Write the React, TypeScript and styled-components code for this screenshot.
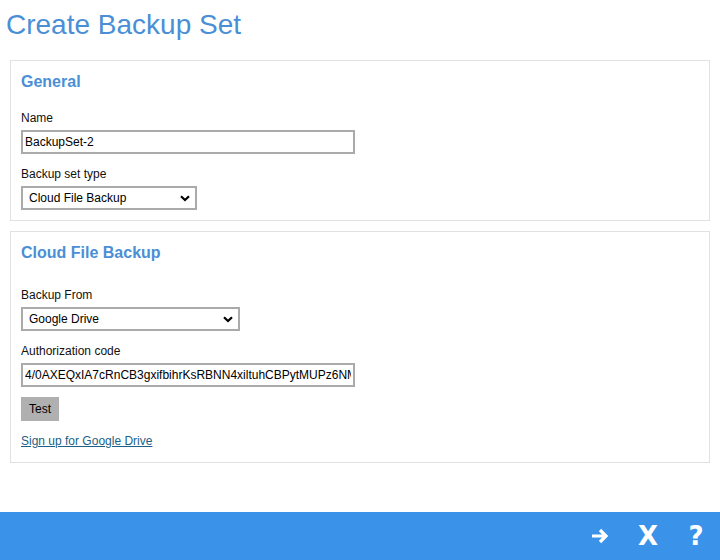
import React from 'react';
import styled, { createGlobalStyle } from 'styled-components';

const GlobalStyle = createGlobalStyle`
  html, body {
    margin: 0;
    padding: 0;
    background: #fff;
    font-family: "Liberation Sans", Arial, sans-serif;
  }
`;

const Page = styled.div`
  width: 720px;
  height: 560px;
  display: flex;
  flex-direction: column;
`;

const Content = styled.div`
  flex: 1;
  padding: 0 10px;
`;

const Title = styled.h1`
  margin: 0 0 0 -4px;
  padding-top: 9px;
  height: 60px;
  box-sizing: border-box;
  font-size: 28px;
  font-weight: normal;
  color: #4a8fd6;
  line-height: 32px;
`;

const Panel = styled.section`
  border: 1px solid #e2e2e2;
  padding: 11px 10px 10px;
  margin-bottom: 10px;
`;

const PanelTitle = styled.h2<{ $gap: number }>`
  margin: 0 0 ${(p) => p.$gap}px;
  font-size: 16px;
  font-weight: bold;
  color: #4a8fd6;
  line-height: 20px;
`;

const Field = styled.div<{ $after?: number }>`
  display: flex;
  flex-direction: column;
  align-items: flex-start;
  margin-bottom: ${(p) => p.$after ?? 13}px;
  &:last-child {
    margin-bottom: 0;
  }
`;

const Label = styled.label`
  font-size: 12px;
  color: #111;
  line-height: 14px;
  margin-bottom: 5px;
`;

const TextInput = styled.input`
  width: 334px;
  height: 24px;
  box-sizing: border-box;
  border: 2px solid #aaa;
  padding: 0 2px;
  font-family: "Liberation Sans", Arial, sans-serif;
  font-size: 12px;
  color: #000;
  outline: none;
`;

const SelectBox = styled.div<{ $w: number }>`
  width: ${(p) => p.$w}px;
  height: 24px;
  box-sizing: border-box;
  border: 2px solid #aaa;
  display: flex;
  align-items: center;
  padding: 0 5px 0 6px;
`;

const Select = styled.select`
  flex: 1;
  appearance: none;
  border: none;
  background: transparent;
  padding: 0;
  font-family: "Liberation Sans", Arial, sans-serif;
  font-size: 12px;
  color: #000;
  outline: none;
`;

const Button = styled.button`
  background: #b0b0b0;
  border: none;
  width: 38px;
  height: 24px;
  padding: 0;
  font-family: "Liberation Sans", Arial, sans-serif;
  font-size: 12px;
  color: #000;
`;

const Link = styled.a`
  font-size: 12px;
  color: #1d5f86;
  text-decoration: underline;
  line-height: 14px;
  margin-bottom: 4px;
`;

const Footer = styled.footer`
  height: 48px;
  background: #3a93e8;
  display: flex;
  align-items: center;
  justify-content: flex-end;
  gap: 28px;
  padding-right: 14px;
`;

const FooterIcon = styled.span`
  color: #fff;
  font-family: "DejaVu Sans", sans-serif;
  font-weight: bold;
  font-size: 26px;
  line-height: 26px;
  width: 20px;
  display: flex;
  justify-content: center;
`;

const Chevron = () => (
  <svg width="10" height="7" viewBox="0 0 10 7">
    <path d="M1 1.2 L5 5 L9 1.2" fill="none" stroke="#000" strokeWidth="2.2" />
  </svg>
);

const Arrow = () => (
  <svg width="20" height="18" viewBox="0 0 20 18">
    <path d="M2 9 H16 M10 3 L16 9 L10 15" fill="none" stroke="#fff" strokeWidth="3.2" strokeLinejoin="miter" />
  </svg>
);

export default function App() {
  return (
    <Page>
      <GlobalStyle />
      <Content>
        <Title>Create Backup Set</Title>
        <Panel>
          <PanelTitle $gap={19}>General</PanelTitle>
          <Field>
            <Label>Name</Label>
            <TextInput defaultValue="BackupSet-2" />
          </Field>
          <Field>
            <Label>Backup set type</Label>
            <SelectBox $w={176}>
              <Select defaultValue="cloud">
                <option value="cloud">Cloud File Backup</option>
              </Select>
              <Chevron />
            </SelectBox>
          </Field>
        </Panel>
        <Panel>
          <PanelTitle $gap={25}>Cloud File Backup</PanelTitle>
          <Field>
            <Label>Backup From</Label>
            <SelectBox $w={219}>
              <Select defaultValue="gdrive">
                <option value="gdrive">Google Drive</option>
              </Select>
              <Chevron />
            </SelectBox>
          </Field>
          <Field $after={10}>
            <Label>Authorization code</Label>
            <TextInput defaultValue="4/0AXEQxIA7cRnCB3gxifbihrKsRBNN4xiltuhCBPytMUPz6NMq2" />
          </Field>
          <Field>
            <Button>Test</Button>
          </Field>
          <Field>
            <Link href="#">Sign up for Google Drive</Link>
          </Field>
        </Panel>
      </Content>
      <Footer>
        <FooterIcon><Arrow /></FooterIcon>
        <FooterIcon>X</FooterIcon>
        <FooterIcon>?</FooterIcon>
      </Footer>
    </Page>
  );
}
